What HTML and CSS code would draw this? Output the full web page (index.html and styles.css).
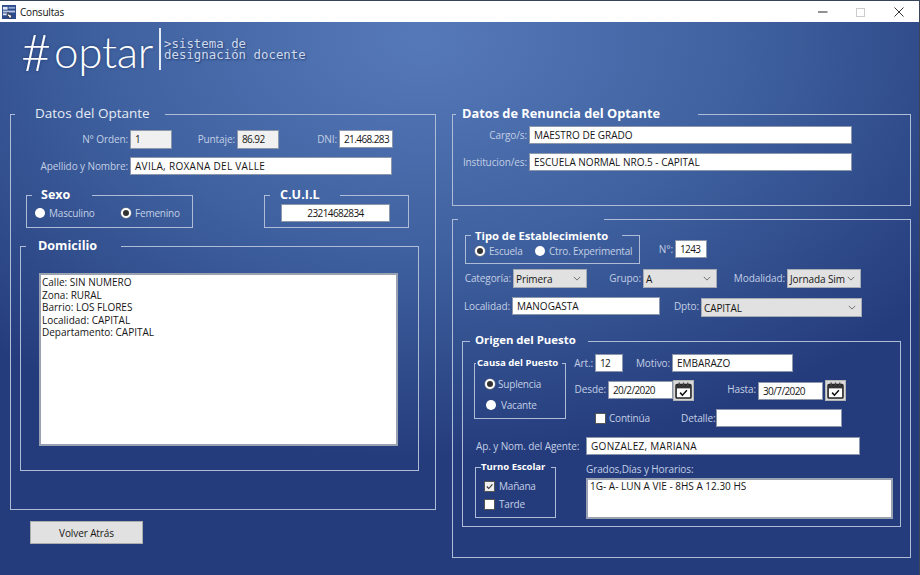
FILE: index.html
```html
<!DOCTYPE html>
<html lang="es">
<head>
<meta charset="utf-8">
<title>Consultas</title>
<link rel="stylesheet" href="styles.css">
</head>
<body>
<div class="window">
  <header class="titlebar">
    <svg class="app-icon" viewBox="0 0 15 15"><rect width="15" height="15" fill="#2c4a8c"/><rect x="1" y="2" width="5" height="3" fill="#dfe6f2"/><rect x="7" y="2" width="7" height="2" fill="#8fa6d0"/><rect x="1" y="6" width="13" height="2" fill="#b9c7e2"/><rect x="1" y="9" width="4" height="2" fill="#dfe6f2"/><path d="M6 8v5l1-1 1 2h2v-3l-3-1V8z" fill="#fff" stroke="#111" stroke-width=".6"/></svg>
    <span class="title">Consultas</span>
    <div class="controls">
      <svg class="ctl" viewBox="0 0 10 10"><path d="M0 5h9.5" stroke="#222" fill="none"/></svg>
      <svg class="ctl" viewBox="0 0 10 10"><rect x="1.5" y="1.5" width="8" height="8" stroke="#ccc" fill="none"/></svg>
      <svg class="ctl" viewBox="0 0 10 10"><path d="M.5.5l9 9M9.5.5l-9 9" stroke="#333" fill="none"/></svg>
    </div>
  </header>

  <main class="content">
    <div class="logo">
      <span class="logo-hash">#</span><span class="logo-name">optar</span>
      <span class="logo-bar"></span>
      <span class="logo-tag">&gt;sistema de<br>designación docente</span>
    </div>

    <div class="columns">
      <section class="col-left">
        <fieldset class="box box-optante">
          <legend class="lg-optante">Datos del Optante</legend>
          <div class="row row-orden">
            <label class="lbl">N° Orden:</label><span class="fld ro num">1</span>
            <label class="lbl">Puntaje:</label><span class="fld ro num">86.92</span>
            <label class="lbl">DNI:</label><span class="fld num">21.468.283</span>
          </div>
          <div class="row row-nombre">
            <label class="lbl">Apellido y Nombre:</label><span class="fld wide">AVILA, ROXANA DEL VALLE</span>
          </div>
          <div class="row-pair">
            <fieldset class="box box-sexo">
              <legend class="lg-sexo">Sexo</legend>
              <div class="radios-sexo">
                <span class="opt"><i class="radio"></i>Masculino</span>
                <span class="opt"><i class="radio on"></i>Femenino</span>
              </div>
            </fieldset>
            <fieldset class="box box-cuil">
              <legend class="lg-cuil">C.U.I.L</legend>
              <span class="fld cuil num">23214682834</span>
            </fieldset>
          </div>
          <fieldset class="box box-dom">
            <legend class="lg-dom">Domicilio</legend>
            <div class="area area-dom">Calle: SIN NUMERO<br>Zona: RURAL<br>Barrio: LOS FLORES<br>Localidad: CAPITAL<br>Departamento: CAPITAL</div>
          </fieldset>
        </fieldset>
        <button class="btn-back" type="button">Volver Atrás</button>
      </section>

      <section class="col-right">
        <fieldset class="box box-renuncia">
          <legend class="lg-renuncia">Datos de Renuncia del Optante</legend>
          <div class="row row-cargo">
            <label class="lbl">Cargo/s:</label><span class="fld">MAESTRO DE GRADO</span>
          </div>
          <div class="row row-cargo row-inst">
            <label class="lbl">Institucion/es:</label><span class="fld">ESCUELA NORMAL NRO.5 - CAPITAL</span>
          </div>
        </fieldset>

        <fieldset class="box box-estab">
          <legend class="lg-empty"></legend>
          <div class="row-tipo">
            <fieldset class="box box-tipo">
              <legend class="lg-tipo">Tipo de Establecimiento</legend>
              <div class="radios-tipo">
                <span class="opt"><i class="radio on"></i>Escuela</span>
                <span class="opt"><i class="radio"></i>Ctro. Experimental</span>
              </div>
            </fieldset>
            <div class="row row-nro">
              <label class="lbl">N°:</label><span class="fld num">1243</span>
            </div>
          </div>
          <div class="row row-cat">
            <label class="lbl">Categoría:</label>
            <span class="sel">Primera<svg class="chev" viewBox="0 0 10 6"><path d="M1 1l4 4 4-4" fill="none" stroke="#555"/></svg></span>
            <label class="lbl">Grupo:</label>
            <span class="sel">A<svg class="chev" viewBox="0 0 10 6"><path d="M1 1l4 4 4-4" fill="none" stroke="#555"/></svg></span>
            <label class="lbl">Modalidad:</label>
            <span class="sel">Jornada Sim<svg class="chev" viewBox="0 0 10 6"><path d="M1 1l4 4 4-4" fill="none" stroke="#555"/></svg></span>
          </div>
          <div class="row row-loc">
            <label class="lbl">Localidad:</label><span class="fld">MANOGASTA</span>
            <label class="lbl">Dpto:</label>
            <span class="sel sel-dpto">CAPITAL<svg class="chev" viewBox="0 0 10 6"><path d="M1 1l4 4 4-4" fill="none" stroke="#555"/></svg></span>
          </div>

          <fieldset class="box box-origen">
            <legend class="lg-origen">Origen del Puesto</legend>
            <div class="origen-top">
              <fieldset class="box box-causa">
                <legend class="lg-causa">Causa del Puesto</legend>
                <span class="opt opt-sup"><i class="radio on"></i>Suplencia</span>
                <span class="opt opt-vac"><i class="radio"></i>Vacante</span>
              </fieldset>
              <div class="origen-fields">
                <div class="row row-art">
                  <label class="lbl">Art.:</label><span class="fld num">12</span>
                  <label class="lbl">Motivo:</label><span class="fld">EMBARAZO</span>
                </div>
                <div class="row row-fechas">
                  <label class="lbl">Desde:</label><span class="fld fecha num">20/2/2020</span>
                  <button class="cal" type="button"><svg viewBox="0 0 16 16"><rect x="1" y="2.5" width="14" height="12.5" rx="1" fill="#fff" stroke="#222" stroke-width="1.5"/><path d="M1 2.5h14v3.5H1z" fill="#333"/><path d="M4 .5v3M8 .5v3M12 .5v3" stroke="#444" stroke-width="1.2"/><path d="M4.8 10l2.2 2.4 4.2-4.6" fill="none" stroke="#111" stroke-width="1.5"/></svg></button>
                  <label class="lbl">Hasta:</label><span class="fld fecha fecha-2 num">30/7/2020</span>
                  <button class="cal" type="button"><svg viewBox="0 0 16 16"><rect x="1" y="2.5" width="14" height="12.5" rx="1" fill="#fff" stroke="#222" stroke-width="1.5"/><path d="M1 2.5h14v3.5H1z" fill="#333"/><path d="M4 .5v3M8 .5v3M12 .5v3" stroke="#444" stroke-width="1.2"/><path d="M4.8 10l2.2 2.4 4.2-4.6" fill="none" stroke="#111" stroke-width="1.5"/></svg></button>
                </div>
                <div class="row row-detalle">
                  <span class="opt opt-cont"><i class="check"></i>Continúa</span>
                  <label class="lbl">Detalle:</label><span class="fld"></span>
                </div>
              </div>
            </div>
            <div class="row row-agente">
              <label class="lbl lbl-left">Ap. y Nom. del Agente:</label><span class="fld wide">GONZALEZ, MARIANA</span>
            </div>
            <div class="origen-bottom">
              <fieldset class="box box-turno">
                <legend class="lg-turno">Turno Escolar</legend>
                <span class="opt opt-man"><i class="check on"><svg viewBox="0 0 10 10"><path d="M2 5l2.2 2.2L8.2 2.6" fill="none" stroke="#333" stroke-width="1.2"/></svg></i>Mañana</span>
                <span class="opt opt-tar"><i class="check"></i>Tarde</span>
              </fieldset>
              <div class="grados">
                <label class="lbl lbl-left">Grados,Días y Horarios:</label>
                <div class="area area-grados">1G- A- LUN A VIE - 8HS A 12.30 HS</div>
              </div>
            </div>
          </fieldset>
        </fieldset>
      </section>
    </div>
  </main>
</div>
</body>
</html>
```

FILE: styles.css
```css
* { box-sizing: border-box; }
html, body { margin: 0; padding: 0; }
body { font-family: "Open Sans", "Noto Sans", sans-serif; font-size: 10px; color: #111; }

.window { width: 920px; height: 575px; display: flex; flex-direction: column; overflow: hidden; border-right: 1px solid #3a4658; }

/* Title bar */
.titlebar { height: 22px; flex: none; background: #fff; border-top: 1px solid #35445c; display: flex; align-items: center; padding-left: 2px; }
.app-icon { width: 14px; height: 14px; margin-right: 4px; }
.title { font-size: 10px; letter-spacing: -.2px; color: #111; }
.controls { margin-left: auto; display: flex; }
.ctl { width: 10px; height: 10px; margin-right: 29px; }
.ctl:first-child { margin-right: 27px; }
.ctl:last-child { margin-right: 15px; }

/* Background */
.content { flex: 1; background: radial-gradient(ellipse 640px 420px at 46% 3%, #5679ba 0%, #3f619f 50%, #253c7c 100%) #253c7c; }

/* Logo */
.logo { height: 85px; display: flex; align-items: flex-start; padding-left: 21px; color: #fff; font-family: Lato, sans-serif; font-weight: 300; text-shadow: 0 0 3px rgba(20, 40, 90, .6); }
.logo-hash { font-size: 52px; line-height: 58px; width: 33px; }
.logo-name { font-size: 44px; line-height: 58px; width: 105px; letter-spacing: -.3px; }
.logo-bar { width: 2px; height: 42px; margin-top: 6px; background: #e4ebf7; }
.logo-tag { font-family: "DejaVu Sans Mono", monospace; font-weight: 400; font-size: 12.4px; line-height: 11px; color: #cfdaec; margin: 16px 0 0 3px; text-shadow: 1px 1px 2px rgba(20, 40, 90, .7); white-space: nowrap; }

.columns { display: flex; padding-left: 10px; gap: 16px; }
.col-left { width: 426px; }
.col-right { width: 459px; }

/* Group boxes */
.box { margin: 0; padding: 0; border: 1px solid #aebcd8; min-width: 0; }
legend { padding: 0; height: 14px; line-height: 13px; color: #fff; font-weight: 700; white-space: nowrap; font-size: 12px; }

.box-optante { height: 403px; padding-top: 9px; }
.lg-optante { font-size: 13.5px; font-weight: 400; color: #e6ebf5; margin-left: 4px; padding: 0 15px 0 20px; }

.row { display: grid; align-items: start; }
.lbl { color: #c3cfe5; text-align: right; padding-right: 2px; white-space: nowrap; line-height: 18px; letter-spacing: -.1px; }
.lbl-left { text-align: left; }
.fld { display: block; height: 18px; line-height: 16px; background: #fff; border: 1px solid #8d97ab; padding-left: 4px; color: #151515; white-space: nowrap; overflow: hidden; }
.ro { background: #f0f0f0; height: 19px; }
.num { letter-spacing: -.6px; }
.wide { letter-spacing: .3px; }

.row-orden { grid-template-columns: 119px 42px 65px 42px 60px 54px; height: 19px; }
.row-nombre { grid-template-columns: 119px 262px; margin-top: 8px; }

.row-pair { display: flex; margin: 13px 0 0 15px; }
.box-sexo { width: 167px; height: 40px; }
.lg-sexo { margin-left: 5px; padding: 0 22px 0 9px; font-size: 12.5px; }
.radios-sexo { display: grid; grid-template-columns: 86px 1fr; padding: 4px 0 0 8px; }
.opt { display: flex; align-items: center; color: #c3cfe5; line-height: 14px; white-space: nowrap; letter-spacing: -.2px; }
.radio { flex: none; width: 10px; height: 10px; border-radius: 50%; background: #fff; margin-right: 4px; }
.radio.on { background: #333; border: 2px solid #fff; box-shadow: 0 0 0 .5px #888; }
.check { flex: none; display: block; width: 11px; height: 11px; background: #fff; border: 1px solid #555; margin-right: 4px; }
.check svg { display: block; width: 9px; height: 9px; }
.check.on { background: #eee; }

.box-cuil { width: 145px; height: 40px; margin-left: 71px; }
.lg-cuil { margin-left: 5px; padding: 0 20px 0 10px; font-size: 12.6px; }
.cuil { width: 109px; height: 18px; margin: 2px 0 0 16px; text-align: center; padding: 0; }

.box-dom { width: 399px; height: 232px; margin: 11px 0 0 9px; }
.lg-dom { margin-left: 5px; padding: 0 24px 0 12px; font-size: 12.6px; }
.area { background: #fff; border: 2px solid #9aa2b2; color: #151515; }
.area-dom { width: 359px; height: 173px; margin: 20px 0 0 18px; padding: 1px 1px; line-height: 12.6px; }

.btn-back { display: block; width: 113px; height: 23px; margin: 11px 0 0 20px; padding: 0; background: #e1e1e1; border: 1px solid #adadad; font: inherit; letter-spacing: -.1px; color: #151515; }

/* Right column */
.box-renuncia { height: 99px; padding-top: 5px; }
.lg-renuncia { font-size: 12.8px; margin-left: 3px; padding: 0 38px 0 6px; }
.row-cargo { grid-template-columns: 76px 323px; }
.row-inst { margin-top: 9px; }

.box-estab { height: 346px; margin-top: 6px; }
.lg-empty { width: 146px; margin-left: 5px; }

.row-tipo { display: flex; margin: 2px 0 0 12px; }
.box-tipo { width: 175px; height: 36px; }
.lg-tipo { margin-left: 5px; padding: 0 14px 0 4px; font-size: 11.2px; line-height: 15px; }
.radios-tipo { display: grid; grid-template-columns: 60px 1fr; padding: 1px 0 0 9px; }
.radios-tipo .opt { line-height: 16px; }
.row-nro { grid-template-columns: 35px 32px; margin-top: 12px; }

.row-cat { grid-template-columns: 60px 74px 56px 74px 70px 74px; margin-top: 5px; }
.row-loc { grid-template-columns: 59px 148px 41px 161px; margin-top: 9px; }
.sel { display: flex; align-items: center; justify-content: space-between; height: 19px; background: #e1e1e1; border: 1px solid #a6abb5; padding: 0 3px 0 2px; color: #151515; white-space: nowrap; letter-spacing: -.1px; }
.sel-dpto { margin-top: 1px; }
.chev { width: 8px; height: 5px; margin-right: 2px; flex: none; }

.box-origen { width: 439px; height: 193px; margin: 17px 0 0 9px; }
.lg-origen { margin-left: 7px; padding: 0 12px 0 5px; font-size: 11.4px; line-height: 12px; }

.origen-top { display: flex; align-items: flex-start; }
.box-causa { width: 92px; height: 63px; margin: 8px 0 0 11px; flex: none; }
.lg-causa { font-size: 9.6px; margin-left: 1px; padding: 0 4px 0 1px; }
.opt-sup { margin: 6px 0 0 10px; line-height: 16px; }
.opt-vac { margin: 6px 0 0 11px; }
.opt-sup .radio { margin-right: 3px; }
.opt-vac .radio { margin-right: 5px; }

.row-art { grid-template-columns: 29px 28px 49px 121px; margin-top: 6px; }
.row-fechas { grid-template-columns: 42px 65px 22px 63px 67px 21px; margin-top: 8px; height: 21px; }
.fecha { margin-top: 1px; width: 65px; }
.fecha-2 { margin-top: 2px; }
.cal { width: 21px; height: 21px; padding: 1px; background: #d9d9d9; border: 1px solid #b5b5b5; display: block; }
.cal svg { display: block; width: 17px; height: 17px; }
.row-detalle { grid-template-columns: 115px 35px 126px; margin-top: 8px; }
.opt-cont { padding: 2px 0 0 29px; }
.opt-cont .check { margin-right: 3px; }

.row-agente { grid-template-columns: 123px 274px; margin-top: 10px; }
.row-agente .lbl { padding-left: 13px; }

.origen-bottom { display: flex; align-items: flex-start; margin-top: 5px; }
.box-turno { width: 81px; height: 58px; margin-left: 12px; flex: none; }
.lg-turno { font-size: 9.5px; margin-left: 5px; padding: 0 6px 0 0; }
.opt-man { margin: 5px 0 0 8px; }
.opt-tar { margin: 4px 0 0 8px; }
.grados { margin: 0 0 0 30px; width: 307px; }
.grados .lbl { display: block; line-height: 18px; padding: 0; }
.area-grados { height: 41px; padding: 0 2px; line-height: 13px; }
```
